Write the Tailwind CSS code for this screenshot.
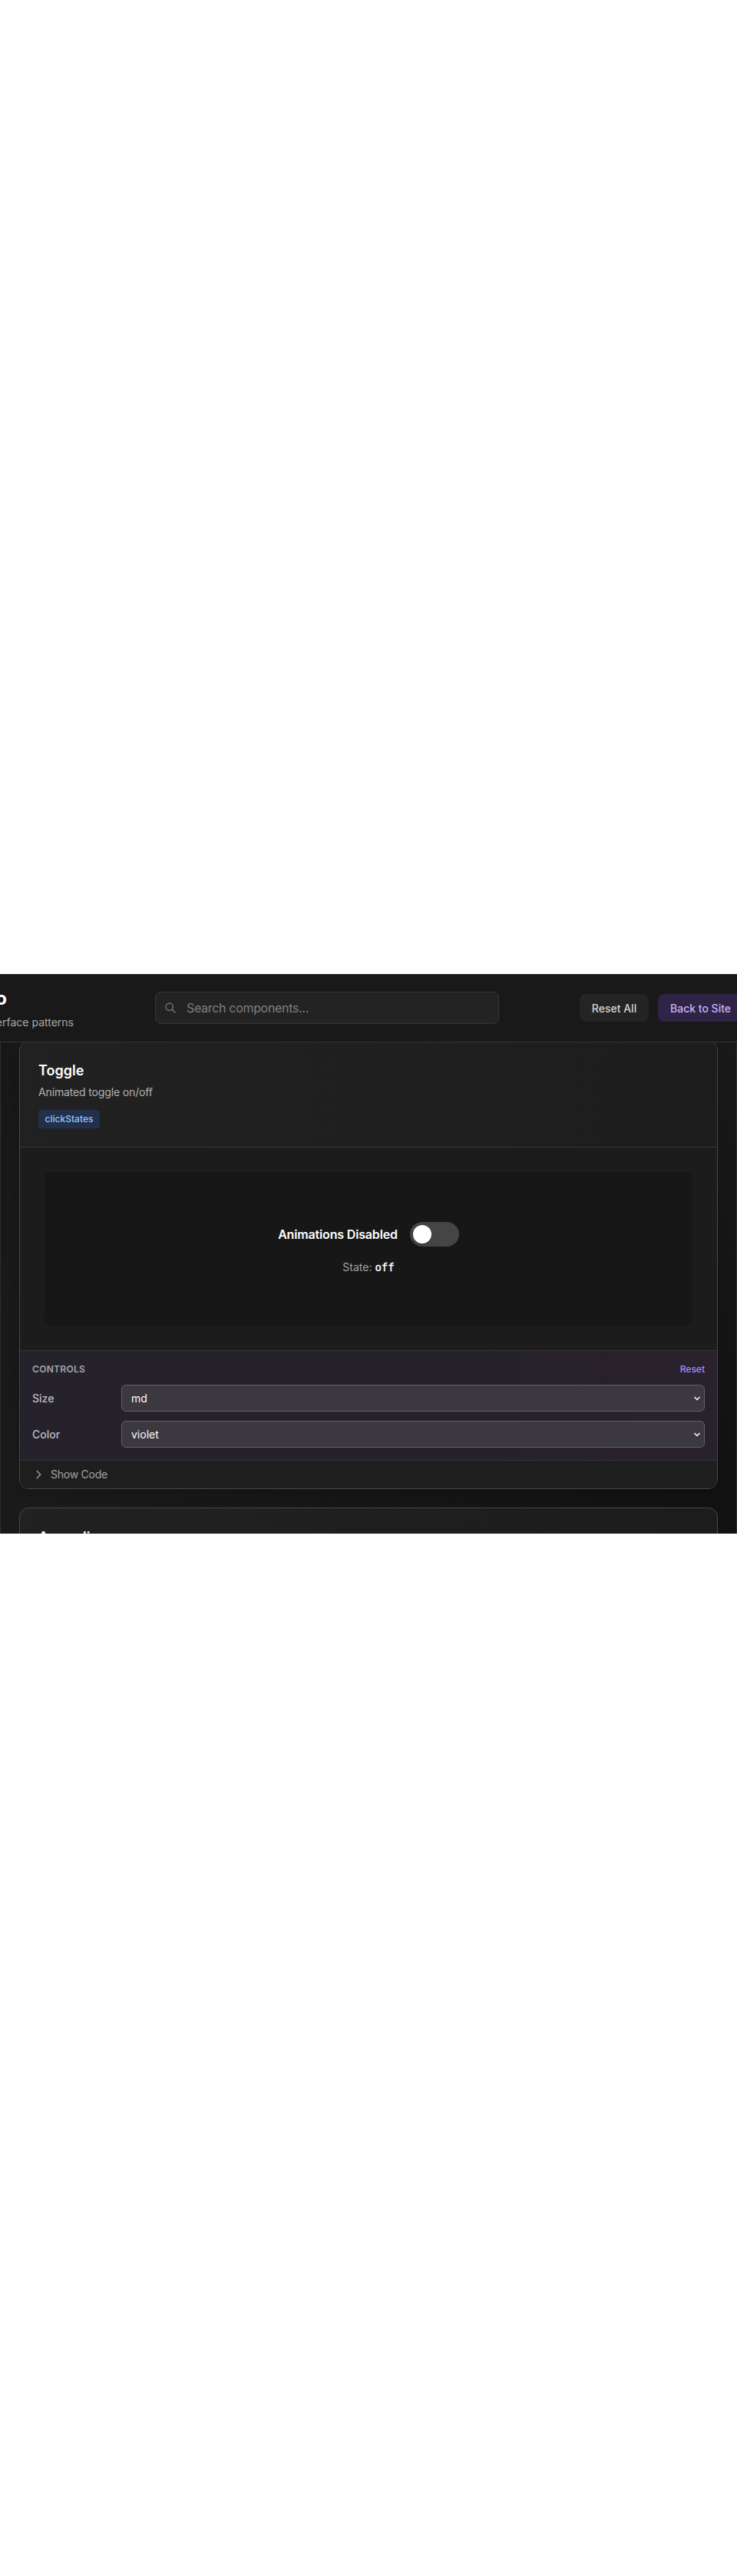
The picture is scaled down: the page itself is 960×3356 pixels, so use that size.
<!DOCTYPE html>
<html lang="en">
<head>
<meta charset="utf-8">
<title>Component Studio</title>
<script src="https://cdn.jsdelivr.net/npm/@tailwindcss/browser@4"></script>
</head>
<body class="bg-white font-['Inter',sans-serif]">
<div class="h-[1269px]"></div>
<div class="h-[729px] w-[960px] overflow-hidden bg-linear-to-br from-[#171717] via-[#1a1a1a] to-[#111111] flex flex-col text-white">
  <header class="relative z-10 flex h-[89px] shrink-0 items-center border-b border-[#333333] bg-[#191919]">
    <div class="flex w-[202px] shrink-0 flex-col">
      <div class="flex w-[9px] justify-end whitespace-nowrap text-2xl font-bold leading-8"><span>Component Studio</span></div>
      <div class="mt-1 flex w-[96px] justify-end whitespace-nowrap text-sm leading-[21px] text-[#a8a8a8]"><span>Interactive interface patterns</span></div>
    </div>
    <div class="flex h-[42px] w-[448px] shrink-0 items-center rounded-lg border border-[#363636] bg-[#232323] pl-[11px]">
      <svg class="size-4" viewBox="0 0 24 24" fill="none" stroke="#7b7b7b" stroke-width="2" stroke-linecap="round" stroke-linejoin="round"><path d="M21 21l-6-6m2-5a7 7 0 11-14 0 7 7 0 0114 0z"/></svg>
      <span class="ml-[13px] text-base tracking-[-0.32px] text-[#7f7f7f]">Search components...</span>
    </div>
    <div class="ml-[105px] flex gap-3 whitespace-nowrap text-sm font-medium">
      <div class="flex h-9 w-[90px] shrink-0 items-center justify-center rounded-lg bg-[#242424] pt-px text-[#d4d4d4]">Reset All</div>
      <div class="flex h-9 shrink-0 items-center rounded-lg bg-[#302446] px-4 pt-px text-[#c4b5fd]">Back to Site</div>
    </div>
  </header>
  <main class="-mt-[2px] flex h-[642px] shrink-0 flex-col gap-6 border-x border-[#2e2e2e] px-6">
    <section class="shrink-0 overflow-hidden rounded-xl border border-[#474747] bg-[#1c1c1c] shadow-lg">
      <div class="border-b border-[#363636] bg-linear-to-r from-[#212121] to-[#1d1d1d] p-6">
        <h3 class="text-lg font-semibold leading-7">Toggle</h3>
        <p class="mt-1 text-sm tracking-[-0.14px] text-[#b3b3b3]">Animated toggle on/off</p>
        <div class="mt-[13px] flex h-6 w-20 items-center justify-center rounded bg-[#22304c] text-xs font-medium text-[#93c5fd]">clickStates</div>
      </div>
      <div class="p-8">
        <div class="flex h-[200px] flex-col items-center justify-center gap-4 rounded-lg bg-[#171717]">
          <div class="flex items-center gap-4">
            <span class="font-semibold tracking-[-0.16px]">Animations Disabled</span>
            <div class="flex h-8 w-16 items-center rounded-full bg-[#454545] px-1"><div class="size-6 rounded-full bg-white shadow-lg"></div></div>
          </div>
          <div class="h-[22px] text-sm leading-[22px] text-[#a3a3a3]">State: <span class="font-['DejaVu_Sans_Mono',monospace] text-white [-webkit-text-stroke:0.4px_white]">off</span></div>
        </div>
      </div>
      <div class="border-y border-[#363636] bg-linear-to-r from-[#25222c] from-65% to-[#29212b] to-90% p-4">
        <div class="flex justify-between text-xs">
          <span class="font-semibold tracking-wide text-[#a6a6a8]">CONTROLS</span>
          <span class="font-medium text-[#a78bfa]">Reset</span>
        </div>
        <div class="mt-3 flex items-center text-sm">
          <span class="w-[116px] font-medium text-[#bdbcc0]">Size</span>
          <div class="flex h-[35px] flex-1 items-center justify-between rounded-md border border-[#626065] bg-[#3c383f] pl-3 pr-[5px]"><span>md</span>
            <svg class="h-[6px] w-[8px]" viewBox="0 0 8 6" fill="none" stroke="white" stroke-width="1.5"><path d="M.5 1L4 4.5 7.5 1"/></svg></div>
        </div>
        <div class="mt-3 flex items-center text-sm">
          <span class="w-[116px] font-medium text-[#bdbcc0]">Color</span>
          <div class="flex h-[35px] flex-1 items-center justify-between rounded-md border border-[#626065] bg-[#3c383f] pl-3 pr-[5px]"><span>violet</span>
            <svg class="h-[6px] w-[8px]" viewBox="0 0 8 6" fill="none" stroke="white" stroke-width="1.5"><path d="M.5 1L4 4.5 7.5 1"/></svg></div>
        </div>
      </div>
      <div class="flex h-9 items-center gap-2 bg-[#1e1e1e] px-4 text-sm text-[#a3a3a3]">
        <svg class="size-4" viewBox="0 0 24 24" fill="none" stroke="currentColor" stroke-width="2" stroke-linecap="round" stroke-linejoin="round"><path d="M9 5l7 7-7 7"/></svg>
        <span class="tracking-[-0.25px]">Show Code</span>
      </div>
    </section>
    <section class="h-[100px] shrink-0 rounded-xl border border-[#474747] bg-linear-to-r from-[#212121] to-[#1c1c1c] p-6">
      <h3 class="text-lg font-semibold leading-7">Accordion</h3>
    </section>
  </main>
</div>
<div class="h-[1358px]"></div>
</body>
</html>
